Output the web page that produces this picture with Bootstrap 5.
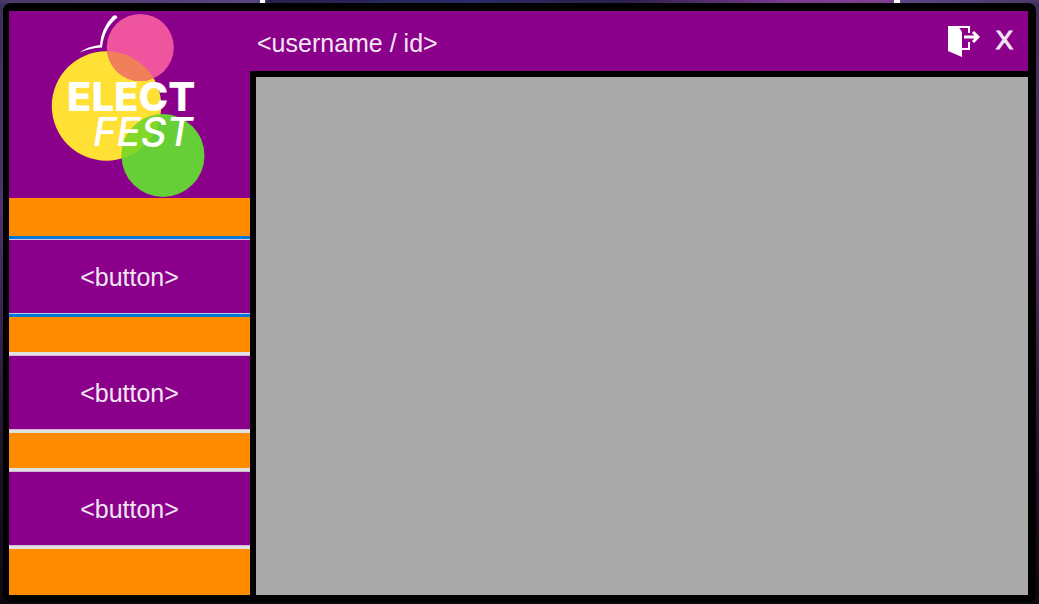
<!DOCTYPE html>
<html lang="en">
<head>
<meta charset="utf-8">
<meta name="viewport" content="width=device-width, initial-scale=1">
<title>Elect Fest</title>
<link href="https://cdn.jsdelivr.net/npm/bootstrap@5.3.0/dist/css/bootstrap.min.css" rel="stylesheet">
<style>
  body {
    font-family: "Liberation Sans", Arial, sans-serif;
    font-size: 25px;
    line-height: 32px;
    color: #f3e6f3;
    padding: 3px 3px 2px;
    background:
      linear-gradient(115deg, #fff, #fff) 260px 0 / 5px 3px no-repeat,
      linear-gradient(#fff, #fff) 894px 0 / 6px 3px no-repeat,
      linear-gradient(90deg, #4a3868 0, #5a4580 25%, #26204a 26%, #2b2a68 45%, #2b2048 60%, #7c3a90 76%, #80408c 86%, #5c4484 87%, #4c3868) 0 0 / 100% 3px no-repeat,
      linear-gradient(#3c3058, #4c3468 35%, #1c1428 75%, #0c0810);
  }
  .app-window {
    background: #000;
    border-radius: 8px;
    padding: 8px 8px 7px 6px;
  }
  .purple { background: #8b008b; }
  .sidebar { width: 241px; background: #ff8c00; }
  .brand { height: 187px; }
  .menu { gap: 35px; padding-top: 38px; }
  .menu-btn {
    height: 81px;
    color: inherit;
    font-size: inherit;
    border: 0 solid #e1e1e1;
    border-width: 3px 0;
    background: #8b008b;
    box-shadow: inset 0 1px #d5b8d5, inset 0 -1px #d5b8d5;
  }
  .menu-btn.active-item {
    border-color: #0078d7;
    box-shadow: inset 0 1px #d8c4e4, inset 0 -1px #b8c4e4;
  }
  .topbar { height: 60px; padding: 0 15px 0 7px; }
  .tool-btn { color: #f3e6f3; line-height: 32px; }
  .close-btn { font-size: 26px; padding: 0 0 2px; -webkit-text-stroke: 1px; }
  .content { border: 6px solid #000; border-width: 6px 0 0 6px; background: #a9a9a9; }
</style>
</head>
<body class="vh-100 d-flex overflow-hidden">
<div class="app-window d-flex flex-grow-1">
  <aside class="sidebar d-flex flex-column flex-shrink-0">
    <div class="brand purple">
      <svg class="d-block" width="241" height="187" viewBox="9 11 241 187" role="img" aria-label="Elect Fest">
        <circle cx="106.500" cy="106" r="54.700" fill="#ffe135"/>
        <circle cx="140.300" cy="47.500" r="33.500" fill="#ef549e"/>
        <circle cx="163" cy="155.500" r="41.500" fill="#66cf38"/>
        <clipPath id="yellowDisc"><circle cx="106.500" cy="106" r="54.700"/></clipPath>
        <g clip-path="url(#yellowDisc)">
          <circle cx="140.300" cy="47.500" r="33.500" fill="#f17f5c"/>
          <circle cx="163" cy="155.500" r="41.500" fill="#82d728"/>
        </g>
        <path d="M79 53Q88 46 100 45Q101 28 113 16Q116 14 117.500 17.500Q104 28 102 47.500Q89 48 79 53Z" fill="#fff"/>
        <g fill="#fff" font-family="Inter, sans-serif" font-size="40">
          <text x="67" y="111" font-weight="800">ELECT</text>
          <text x="93" y="146" font-style="italic" font-weight="500">FEST</text>
        </g>
      </svg>
    </div>
    <nav class="menu d-flex flex-column" aria-label="Main">
      <button type="button" class="menu-btn active-item">&lt;button&gt;</button>
      <button type="button" class="menu-btn">&lt;button&gt;</button>
      <button type="button" class="menu-btn">&lt;button&gt;</button>
    </nav>
  </aside>
  <div class="d-flex flex-column flex-grow-1">
    <header class="topbar purple d-flex align-items-center justify-content-between">
      <span class="mt-1">&lt;username / id&gt;</span>
      <div class="d-flex align-items-center gap-3">
        <button type="button" class="tool-btn border-0 bg-transparent p-0 d-flex" aria-label="Log out">
          <svg width="32" height="32" viewBox="0 0 32 32" fill="none">
            <path d="M0 1H10L14 7V32L0 26Z" fill="#fff"/>
            <path d="M1 2H21V8M21 17V24H13" stroke="#fff" stroke-width="2"/>
            <path d="M16 12H28M25 7L30 12L25 17" stroke="#fff" stroke-width="3"/>
          </svg>
        </button>
        <button type="button" class="tool-btn close-btn border-0 bg-transparent" aria-label="Close">X</button>
      </div>
    </header>
    <main class="content flex-grow-1"></main>
  </div>
</div>
<script src="https://cdn.jsdelivr.net/npm/bootstrap@5.3.0/dist/js/bootstrap.bundle.min.js"></script>
</body>
</html>
